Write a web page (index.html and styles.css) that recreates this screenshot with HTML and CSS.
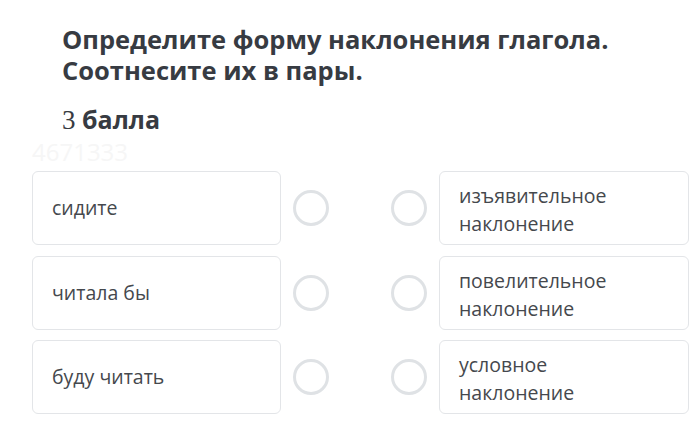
FILE: index.html
```html
<!DOCTYPE html>
<html lang="ru">
<head>
<meta charset="utf-8">
<link rel="stylesheet" href="styles.css">
</head>
<body>
<div class="page">
  <h1 class="title">Определите форму наклонения глагола.<br>Соотнесите их в пары.</h1>
  <div class="points"><span class="num">3</span> балла</div>
  <div class="watermark">4671333</div>
  <div class="rows">
    <div class="row">
      <div class="box left">сидите</div>
      <div class="dot"></div>
      <div class="dot second"></div>
      <div class="box right">изъявительное<br>наклонение</div>
    </div>
    <div class="row">
      <div class="box left">читала бы</div>
      <div class="dot"></div>
      <div class="dot second"></div>
      <div class="box right">повелительное<br>наклонение</div>
    </div>
    <div class="row">
      <div class="box left">буду читать</div>
      <div class="dot"></div>
      <div class="dot second"></div>
      <div class="box right">условное<br>наклонение</div>
    </div>
  </div>
</div>
</body>
</html>
```
FILE: styles.css
```css
html, body {
  margin: 0;
  padding: 0;
  background: #ffffff;
}
.page {
  width: 698px;
  height: 441px;
  overflow: hidden;
  font-family: "Open Sans", sans-serif;
  color: #3a3e44;
  box-sizing: border-box;
  padding: 24px 0 0 32px;
}
.title {
  margin: 0 0 0 30px;
  font-size: 25.5px;
  font-weight: 700;
  line-height: 31px;
  color: #373b42;
}
.points {
  margin: 18px 0 0 30px;
  font-size: 25px;
  font-weight: 700;
  line-height: 30px;
  color: #373b42;
}
.num {
  font-family: "Liberation Serif", serif;
  font-weight: 400;
  font-size: 27px;
}
.watermark {
  font-size: 24px;
  line-height: 28px;
  color: #f6f6f6;
  height: 28px;
  margin-top: 3px;
}
.rows {
  margin-top: 5px;
  display: flex;
  flex-direction: column;
  gap: 10.5px;
}
.row {
  display: flex;
  align-items: center;
  column-gap: 12px;
}
.box {
  box-sizing: border-box;
  height: 74px;
  border: 1px solid #e3e5e8;
  border-radius: 6px;
  background: #fff;
  font-size: 19.5px;
  line-height: 28px;
  color: #45484d;
  display: flex;
  align-items: center;
}
.left {
  width: 249px;
  padding-left: 19px;
}
.right {
  width: 250px;
  padding: 10px 0 0 19px;
  align-items: flex-start;
}
.dot {
  box-sizing: border-box;
  flex: 0 0 36px;
  width: 36px;
  height: 36px;
  border: 3px solid #dfe2e5;
  border-radius: 50%;
}
.second {
  margin-left: 50px;
}
```
